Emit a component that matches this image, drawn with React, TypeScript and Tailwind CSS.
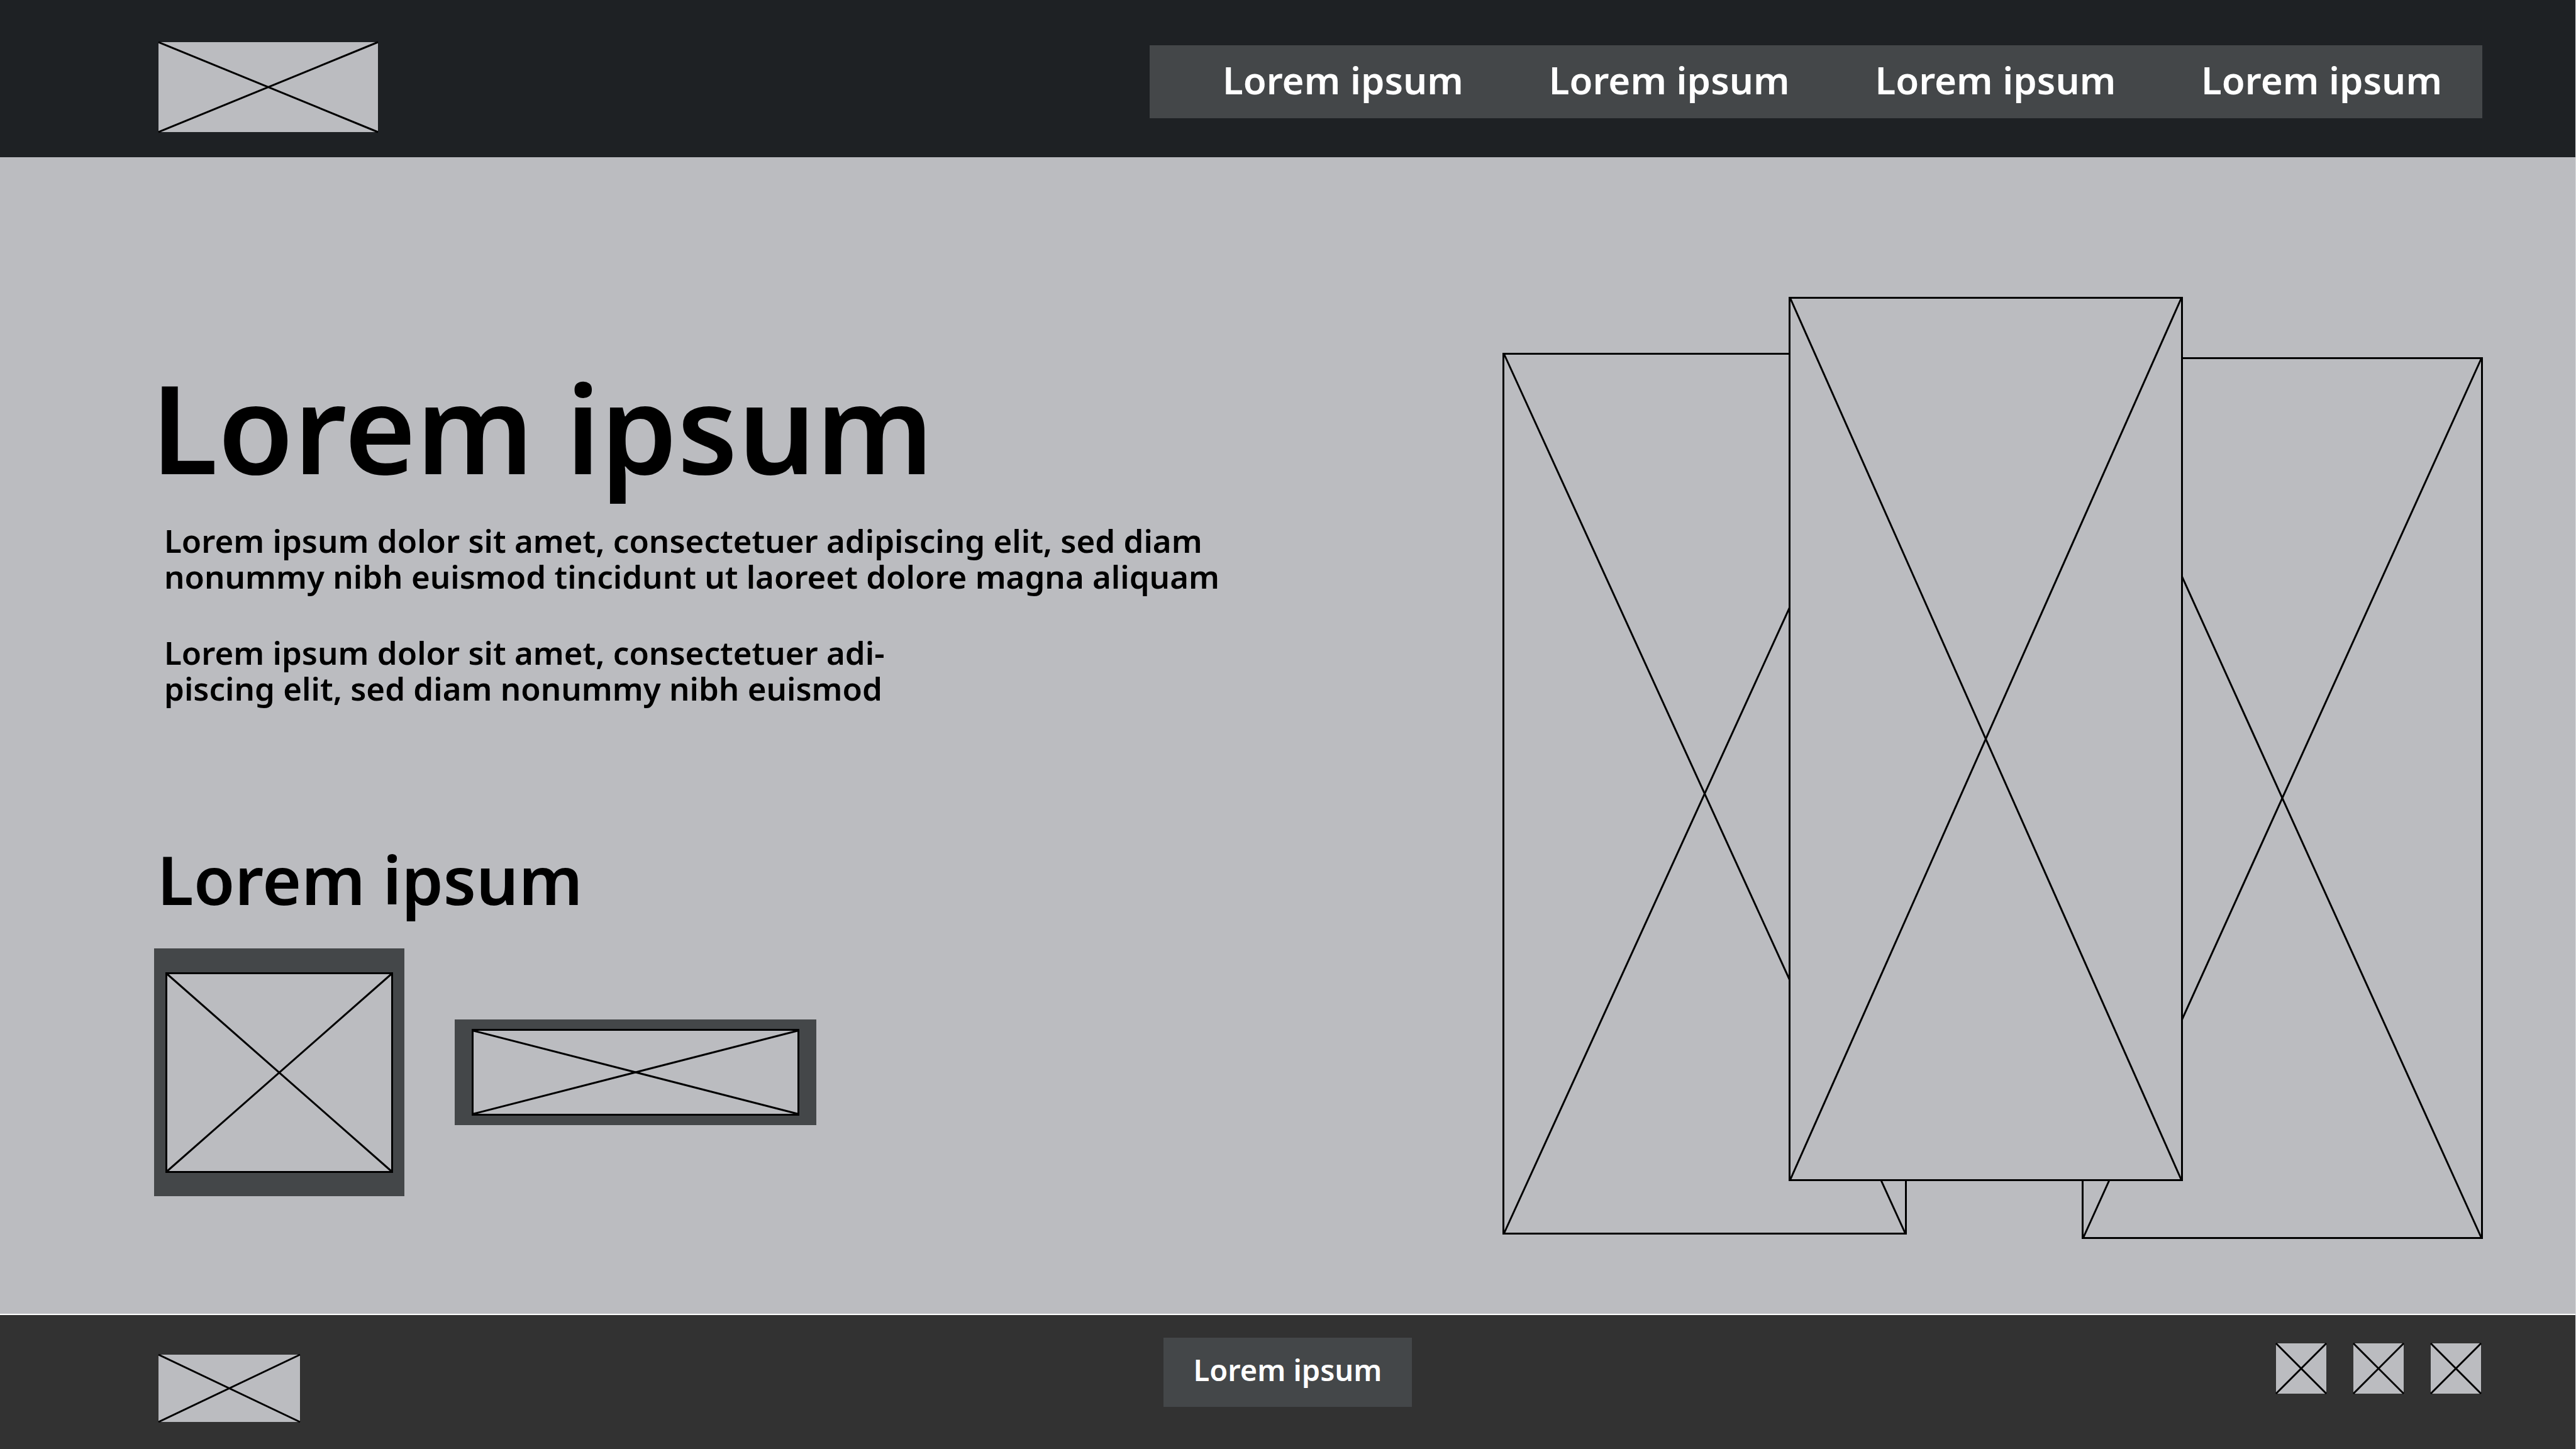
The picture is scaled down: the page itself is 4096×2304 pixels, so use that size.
import { clsx } from 'clsx';

const navItems = [
  { id: 'nav-1', label: 'Lorem ipsum' },
  { id: 'nav-2', label: 'Lorem ipsum' },
  { id: 'nav-3', label: 'Lorem ipsum' },
  { id: 'nav-4', label: 'Lorem ipsum' },
];

const socialItems = ['Social link 1', 'Social link 2', 'Social link 3'];

/** A grey image placeholder crossed by its two diagonals. */
function Placeholder({ className, outlined = false }: { className: string; outlined?: boolean }) {
  return (
    <div className={clsx('shrink-0 bg-[#bbbcc0]', outlined && 'border-3 border-black', className)}>
      <svg className="block size-full overflow-visible" stroke="black" strokeWidth="3" aria-hidden="true">
        <line x1="0" y1="0" x2="100%" y2="100%" />
        <line x1="100%" y1="0" x2="0" y2="100%" />
      </svg>
    </div>
  );
}

function Header() {
  return (
    <header className="flex items-start justify-between bg-[#1e2124] pt-[67px] pr-[148px] pb-10 pl-[252px]">
      <a href="#home" aria-label="Home">
        <Placeholder className="h-[143px] w-[349px]" />
      </a>
      <nav className="mt-[5px] flex w-[2119px] justify-between bg-[#444749] pt-3.5 pr-16 pb-5 pl-[116px]">
        {navItems.map((item) => (
          <a key={item.id} href={`#${item.id}`} className="text-[60px] leading-[82px] font-semibold text-white">
            {item.label}
          </a>
        ))}
      </nav>
    </header>
  );
}

function Intro() {
  return (
    <section className="flex flex-col pt-[329px] pl-60">
      <h1 className="text-[195px] leading-[200px] font-semibold">Lorem ipsum</h1>
      <div className="mt-[52px] flex flex-col gap-16 pl-[21px] text-[51px] leading-[57px] font-semibold">
        <p>
          Lorem ipsum dolor sit amet, consectetuer adipiscing elit, sed diam
          <br />
          nonummy nibh euismod tincidunt ut laoreet dolore magna aliquam
        </p>
        <p>
          Lorem ipsum dolor sit amet, consectetuer adi-
          <br />
          piscing elit, sed diam nonummy nibh euismod
        </p>
      </div>
      <h2 className="mt-[221px] pl-2.5 text-[106px] leading-[108px] font-semibold">Lorem ipsum</h2>
      <div className="mt-14 flex items-center gap-20 pl-[5px]">
        <div className="flex h-[394px] w-[398px] items-center justify-center bg-[#444749]">
          <Placeholder outlined className="h-[319px] w-[362px]" />
        </div>
        <div className="flex h-[168px] w-[575px] items-center justify-center bg-[#444749]">
          <Placeholder outlined className="h-[138px] w-[521px]" />
        </div>
      </div>
    </section>
  );
}

function Gallery() {
  return (
    <section className="flex items-start pt-[222px] pr-[147px]">
      <Placeholder outlined className="mt-[89px] h-[1402px] w-[643px]" />
      <Placeholder outlined className="z-10 -ml-[188px] h-[1406px] w-[627px]" />
      <Placeholder outlined className="mt-24 -ml-[161px] h-[1402px] w-[638px]" />
    </section>
  );
}

function Footer() {
  return (
    <footer className="grid grid-cols-[1fr_auto_1fr] items-start border-t-2 border-white bg-[#323232] pt-9 pb-[43px]">
      <a href="#home" aria-label="Home" className="mt-[27px] justify-self-start pl-[252px]">
        <Placeholder className="h-[107px] w-[225px]" />
      </a>
      <button type="button" className="bg-[#444749] px-12 pt-[18px] pb-[26px] text-[47px] leading-[66px] font-semibold text-white">
        Lorem ipsum
      </button>
      <div className="mt-[9px] flex justify-end gap-[43px] pr-[150px]">
        {socialItems.map((label) => (
          <a key={label} href="#social" aria-label={label}>
            <Placeholder className="size-20" />
          </a>
        ))}
      </div>
    </footer>
  );
}

export default function App() {
  return (
    <div className="flex min-h-screen flex-col border-r border-[#dddee0] bg-[#bbbcc0] font-['Noto_Sans',sans-serif] text-black">
      <Header />
      <main className="flex flex-1 items-start justify-between">
        <Intro />
        <Gallery />
      </main>
      <Footer />
    </div>
  );
}
